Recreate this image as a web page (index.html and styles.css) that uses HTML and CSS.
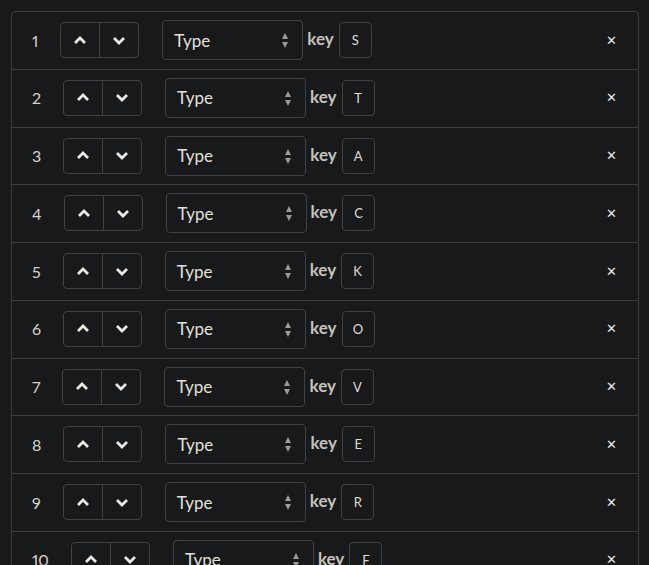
FILE: index.html
```html
<!DOCTYPE html>
<html>
<head>
<meta charset="utf-8">
<link rel="stylesheet" href="styles.css">
</head>
<body>
<div class="list">
  <div class="row"><span class="num">1</span><div class="group"><button class="mv"><svg viewBox="0 0 14 9"><path d="M2 7 7 2l5 5"/></svg></button><button class="mv"><svg viewBox="0 0 14 9"><path d="M2 2 7 7l5-5"/></svg></button></div><div class="sel">Type<span class="arr"><i class="up"></i><i class="dn"></i></span></div><span class="key">key</span><span class="kbox">S</span><span class="close">✕</span></div>
  <div class="row"><span class="num">2</span><div class="group"><button class="mv"><svg viewBox="0 0 14 9"><path d="M2 7 7 2l5 5"/></svg></button><button class="mv"><svg viewBox="0 0 14 9"><path d="M2 2 7 7l5-5"/></svg></button></div><div class="sel">Type<span class="arr"><i class="up"></i><i class="dn"></i></span></div><span class="key">key</span><span class="kbox">T</span><span class="close">✕</span></div>
  <div class="row"><span class="num">3</span><div class="group"><button class="mv"><svg viewBox="0 0 14 9"><path d="M2 7 7 2l5 5"/></svg></button><button class="mv"><svg viewBox="0 0 14 9"><path d="M2 2 7 7l5-5"/></svg></button></div><div class="sel">Type<span class="arr"><i class="up"></i><i class="dn"></i></span></div><span class="key">key</span><span class="kbox">A</span><span class="close">✕</span></div>
  <div class="row"><span class="num">4</span><div class="group"><button class="mv"><svg viewBox="0 0 14 9"><path d="M2 7 7 2l5 5"/></svg></button><button class="mv"><svg viewBox="0 0 14 9"><path d="M2 2 7 7l5-5"/></svg></button></div><div class="sel">Type<span class="arr"><i class="up"></i><i class="dn"></i></span></div><span class="key">key</span><span class="kbox">C</span><span class="close">✕</span></div>
  <div class="row"><span class="num">5</span><div class="group"><button class="mv"><svg viewBox="0 0 14 9"><path d="M2 7 7 2l5 5"/></svg></button><button class="mv"><svg viewBox="0 0 14 9"><path d="M2 2 7 7l5-5"/></svg></button></div><div class="sel">Type<span class="arr"><i class="up"></i><i class="dn"></i></span></div><span class="key">key</span><span class="kbox">K</span><span class="close">✕</span></div>
  <div class="row"><span class="num">6</span><div class="group"><button class="mv"><svg viewBox="0 0 14 9"><path d="M2 7 7 2l5 5"/></svg></button><button class="mv"><svg viewBox="0 0 14 9"><path d="M2 2 7 7l5-5"/></svg></button></div><div class="sel">Type<span class="arr"><i class="up"></i><i class="dn"></i></span></div><span class="key">key</span><span class="kbox">O</span><span class="close">✕</span></div>
  <div class="row"><span class="num">7</span><div class="group"><button class="mv"><svg viewBox="0 0 14 9"><path d="M2 7 7 2l5 5"/></svg></button><button class="mv"><svg viewBox="0 0 14 9"><path d="M2 2 7 7l5-5"/></svg></button></div><div class="sel">Type<span class="arr"><i class="up"></i><i class="dn"></i></span></div><span class="key">key</span><span class="kbox">V</span><span class="close">✕</span></div>
  <div class="row"><span class="num">8</span><div class="group"><button class="mv"><svg viewBox="0 0 14 9"><path d="M2 7 7 2l5 5"/></svg></button><button class="mv"><svg viewBox="0 0 14 9"><path d="M2 2 7 7l5-5"/></svg></button></div><div class="sel">Type<span class="arr"><i class="up"></i><i class="dn"></i></span></div><span class="key">key</span><span class="kbox">E</span><span class="close">✕</span></div>
  <div class="row"><span class="num">9</span><div class="group"><button class="mv"><svg viewBox="0 0 14 9"><path d="M2 7 7 2l5 5"/></svg></button><button class="mv"><svg viewBox="0 0 14 9"><path d="M2 2 7 7l5-5"/></svg></button></div><div class="sel">Type<span class="arr"><i class="up"></i><i class="dn"></i></span></div><span class="key">key</span><span class="kbox">R</span><span class="close">✕</span></div>
  <div class="row"><span class="num">10</span><div class="group"><button class="mv"><svg viewBox="0 0 14 9"><path d="M2 7 7 2l5 5"/></svg></button><button class="mv"><svg viewBox="0 0 14 9"><path d="M2 2 7 7l5-5"/></svg></button></div><div class="sel">Type<span class="arr"><i class="up"></i><i class="dn"></i></span></div><span class="key">key</span><span class="kbox">F</span><span class="close">✕</span></div>
</div>
</body>
</html>
```

FILE: styles.css
```css
html, body {
  margin: 0;
  background: #17191b;
}
body {
  padding: 11px 0 0 11px;
  font-family: Lato, "Open Sans", sans-serif;
  color: #d6d2cc;
}
.list {
  width: 626px;
  border: 1px solid #3a3d40;
  border-radius: 4px;
}
.row {
  display: flex;
  align-items: center;
  height: 40px;
  padding: 8px 21px 8.75px 20px;
  border-bottom: 1px solid #3a3d40;
}
.num {
  font-size: 16px;
  margin-right: 22px;
  color: #d8d2ca;
  font-variant-numeric: proportional-nums;
}
.group {
  display: flex;
  height: 36px;
  border: 1px solid #3e4246;
  border-radius: 4px;
  box-sizing: border-box;
  width: 79px;
}
.mv {
  flex: 1;
  background: transparent;
  border: 0;
  padding: 0;
  display: flex;
  align-items: center;
  justify-content: center;
}
.mv + .mv {
  border-left: 1px solid #3e4246;
}
.mv svg {
  width: 14px;
  height: 9px;
  fill: none;
  stroke: #ece8e2;
  stroke-width: 2.8;
}
.sel {
  margin-left: 23px;
  width: 141px;
  height: 40px;
  box-sizing: border-box;
  border: 1px solid #3e4246;
  border-radius: 4px;
  display: flex;
  align-items: center;
  padding-left: 11px;
  font-size: 17px;
  color: #e4e0da;
  position: relative;
}
.arr {
  position: absolute;
  right: 14px;
  top: 12px;
  display: flex;
  flex-direction: column;
  gap: 3px;
}
.arr i {
  width: 0;
  height: 0;
  border-left: 3.5px solid transparent;
  border-right: 3.5px solid transparent;
}
.arr .up { border-bottom: 6px solid #9a9a9a; }
.arr .dn { border-top: 6px solid #9a9a9a; }
.key {
  margin-left: 4px;
  margin-top: -3px;
  font-size: 17px;
  font-weight: 700;
  color: #c6c2bc;
}
.kbox {
  margin-left: 5px;
  width: 33px;
  height: 36px;
  box-sizing: border-box;
  border: 1px solid #3e4246;
  border-radius: 4px;
  display: flex;
  align-items: center;
  justify-content: center;
  font-size: 13px;
  color: #e0dcd6;
}
.close {
  margin-left: auto;
  font-size: 13px;
  font-weight: 700;
  color: #ece8e2;
  font-family: "DejaVu Sans", sans-serif;
}
```
